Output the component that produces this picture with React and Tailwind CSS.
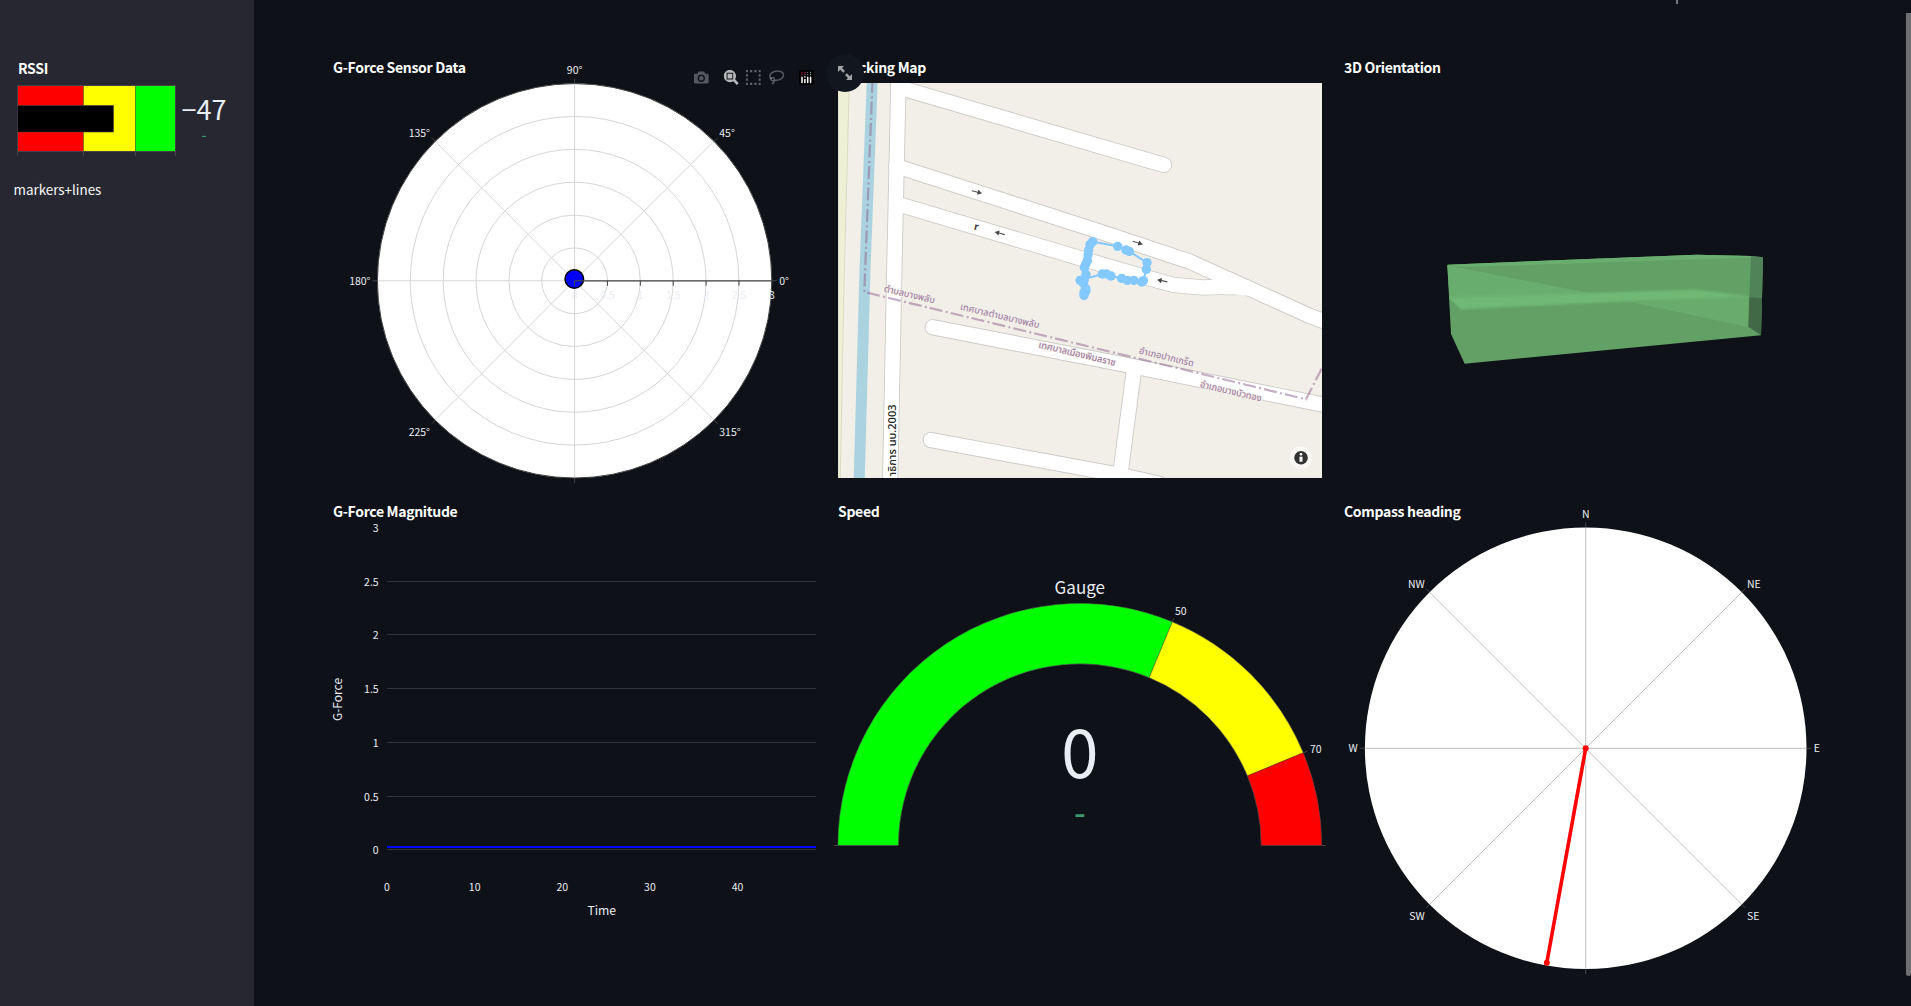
import React from "react";

const SANS = "font-['Noto_Sans_CJK_JP','Noto_Sans',sans-serif]";
const AXIS = "#444";
const TEXT = "#e9edf4";

function rad(deg) {
  return (deg * Math.PI) / 180;
}

function Panel({ title, children }) {
  return (
    <section className="flex flex-col">
      <h2 className="flex h-[29px] items-center pb-[4px] text-[14px] leading-[20px] font-bold tracking-[-0.32px] text-white">
        {title}
      </h2>
      {children}
    </section>
  );
}

function Label({ x, y, anchor = "middle", size = 10.5, fill = TEXT, weight = 400, children }) {
  return (
    <text x={x} y={y} textAnchor={anchor} fontSize={size} fill={fill} fontWeight={weight}>
      {children}
    </text>
  );
}

/* ---------- Sidebar ---------- */

function Rssi() {
  return (
    <svg viewBox="0 83 254 80" className="block h-[80px] w-[254px]">
      <rect x="17.5" y="85.5" width="66" height="66" fill="#f00" />
      <rect x="83.5" y="85.5" width="52" height="66" fill="#ff0" />
      <rect x="135.5" y="85.5" width="40" height="66" fill="#0f0" />
      <g fill="none" stroke={AXIS}>
        <rect x="17.5" y="85.5" width="158" height="66" />
        <path d="M83.5 85.5v66M135.5 85.5v66" strokeOpacity="0.4" />
      </g>
      <rect x="17.5" y="105.5" width="96" height="26.5" fill="#000" stroke="#444" strokeOpacity="0.6" />
      <path d="M17.5 152v4M83.5 152v4M135.5 152v4M175.5 152v4" stroke={AXIS} />
      <Label x={204} y={120} size={27}>−47</Label>
      <Label x={204} y={140} size={14} weight={500} fill="#3d9970">-</Label>
    </svg>
  );
}

/* ---------- Row 1 ---------- */

const FLIP = "matrix(1 0 0 -1 0 850)";

function ModeBar() {
  return (
    <g fill="#fff">
      <svg x="693.8" y="70" width="15" height="15" viewBox="0 0 1000 1000" fillOpacity="0.3">
        <path
          transform={FLIP}
          d="m500 450c-83 0-150-67-150-150 0-83 67-150 150-150 83 0 150 67 150 150 0 83-67 150-150 150z m400 150h-120c-16 0-34 13-39 29l-31 93c-6 15-23 28-40 28h-340c-16 0-34-13-39-28l-31-94c-6-15-23-28-40-28h-120c-55 0-100-45-100-100v-450c0-55 45-100 100-100h800c55 0 100 45 100 100v450c0 55-45 100-100 100z m-400-550c-138 0-250 112-250 250 0 138 112 250 250 250 138 0 250-112 250-250 0-138-112-250-250-250z m365 380c-19 0-35 16-35 35 0 19 16 35 35 35 19 0 35-16 35-35 0-19-16-35-35-35z"
        />
      </svg>
      <svg x="723.8" y="70" width="15" height="15" viewBox="0 0 1000 1000" fillOpacity="0.7">
        <path
          transform={FLIP}
          d="m1000-25l-250 251c40 63 63 138 63 218 0 224-182 406-407 406-224 0-406-182-406-406s183-406 407-406c80 0 155 22 218 62l250-250 125 125z m-812 250l0 438 437 0 0-438-437 0z m62 375l313 0 0-312-313 0 0 312z"
        />
      </svg>
      <svg x="745.8" y="70" width="15" height="15" viewBox="0 0 1000 1000" fillOpacity="0.35">
        <path
          transform={FLIP}
          d="m0 850l0-143 143 0 0 143-143 0z m286 0l0-143 143 0 0 143-143 0z m285 0l0-143 143 0 0 143-143 0z m286 0l0-143 143 0 0 143-143 0z m-857-286l0-143 143 0 0 143-143 0z m857 0l0-143 143 0 0 143-143 0z m-857-285l0-143 143 0 0 143-143 0z m857 0l0-143 143 0 0 143-143 0z m-857-286l0-143 143 0 0 143-143 0z m286 0l0-143 143 0 0 143-143 0z m285 0l0-143 143 0 0 143-143 0z m286 0l0-143 143 0 0 143-143 0z"
        />
      </svg>
      <g fill="none" stroke="#fff" strokeOpacity="0.3" strokeWidth="1.5">
        <path d="M771.3 79.3c-2-1.7-2.1-4.5.4-6.500 3-2.400 8.400-2.500 10.800-.2 2.300 2.300.8 5.600-2.900 7-1.600.6-3.400.8-5 .6" />
        <circle cx="772.6" cy="79.1" r="1.7" />
        <path d="M773.8 80.5c.6 1.400-.2 2.600-2 3.400" />
      </g>
      <rect x="799" y="70" width="15" height="15" rx="2" fill="#000" />
      <g strokeWidth="1.5" strokeLinecap="round">
        <path d="M802 77.200v5.300M804.900 79.500v3M807.700 77.200v5.300M810.600 77.200v5.300" stroke="#fff" />
        <path d="M804.900 76.800v.1" stroke="#fff" />
        <path d="M802 74.200h.01M802 72.300h.01M804.900 72.500h.01" stroke="#d6244f" strokeWidth="1.3" />
        <path d="M804.900 74.600h.01M807.700 74.400h.01M807.700 72.300h.01" stroke="#8d7f96" strokeWidth="1.2" />
        <path d="M810.600 74.400h.01M810.600 72.300h.01" stroke="#8fd0cf" strokeWidth="1.2" />
      </g>
    </g>
  );
}

function SensorPolar() {
  const cx = 574.6;
  const cy = 280.8;
  const r = 197.2;
  const step = r / 6;
  return (
    <svg viewBox="333 83 484 395" className="block h-[395px] w-[484px] overflow-visible">
      <circle cx={cx} cy={cy} r={r} fill="#fff" />
      <g fill="none" stroke="#d6d6d6" strokeWidth="1">
        {[1, 2, 3, 4, 5].map((i) => (
          <circle key={i} cx={cx} cy={cy} r={step * i} />
        ))}
        {[0, 45, 90, 135, 180, 225, 270, 315].map((a) => (
          <path key={a} d={`M${cx} ${cy}L${cx + r * Math.cos(rad(a))} ${cy + r * Math.sin(rad(a))}`} />
        ))}
      </g>
      <circle cx={cx} cy={cy} r={r} fill="none" stroke={AXIS} />
      {[0, 45, 90, 135, 180, 225, 270, 315].map((a) => (
        <path
          key={a}
          stroke={AXIS}
          d={`M${cx + r * Math.cos(rad(a))} ${cy + r * Math.sin(rad(a))}L${cx + (r + 5) * Math.cos(rad(a))} ${cy + (r + 5) * Math.sin(rad(a))}`}
        />
      ))}
      <circle cx="574.3" cy="279" r="9.3" fill="#00f" stroke="#000" strokeWidth="1.5" />
      <path d={`M${cx} ${cy}H${cx + r}`} stroke={AXIS} strokeWidth="1.2" />
      {[0, 1, 2, 3, 4, 5, 6].map((i) => (
        <React.Fragment key={i}>
          <path d={`M${cx + step * i} ${cy}v5`} stroke={AXIS} />
          <Label x={cx + step * i} y={299.3}>{i / 2}</Label>
        </React.Fragment>
      ))}
      <Label x={574.6} y={74.3}>90°</Label>
      <Label x={719.3} y={137} anchor="start">45°</Label>
      <Label x={430} y={137} anchor="end">135°</Label>
      <Label x={370.5} y={285} anchor="end">180°</Label>
      <Label x={779.3} y={285} anchor="start">0°</Label>
      <Label x={430} y={436} anchor="end">225°</Label>
      <Label x={719.3} y={436} anchor="start">315°</Label>
      <ModeBar />
    </svg>
  );
}

const ROADS = [
  "M898 87.2L1164 165",
  "M896 166L1093.3 229.5L1190 261.7L1280 302.5L1310 316L1330 323.5",
  "M896 203.5L1083 259L1150 278.5L1174 285L1203 287.5L1232 286.7",
  "M1225 287.2L1246 287",
  "M932.7 327.3L1126.7 365L1330 406",
  "M1134 370L1120.3 474",
  "M930.7 440L1120 475L1160 484",
  "M898.6 75L894 285L890 490",
];

const TRACK = [
  [121, 181], [187, 162], [200, 162], [213, 168], [245, 175], [262, 181], [282, 181], [305, 186], [310, 182],
  [319, 148], [321, 128], [268, 94], [258, 90], [233, 79], [158, 65], [150, 74], [146, 90], [144, 105],
  [142, 122], [137, 133], [133, 143], [138, 163], [121, 181], [133, 179], [130, 190], [137, 205], [138, 213], [132, 218], [132, 226],
].map(([x, y]) => [1040 + x / 3, 220 + y / 3]);

function OneWay({ x, y, angle }) {
  return (
    <g transform={`translate(${x} ${y}) rotate(${angle})`}>
      <path d="M-5 0H2" stroke="#555" strokeWidth="1.1" />
      <path d="M1 -2.600L5.500 0L1 2.600z" fill="#444" />
    </g>
  );
}

function MapLabel({ x, y, width, angle = 13.5, children }) {
  return (
    <text
      transform={`translate(${x} ${y}) rotate(${angle})`}
      textLength={width}
      lengthAdjust="spacingAndGlyphs"
      fontSize="9.5"
      fontWeight="500"
      fill="#a27fa2"
      stroke="#f2efe9"
      strokeWidth="1.5"
      paintOrder="stroke"
    >
      {children}
    </text>
  );
}

function TrackingMap() {
  return (
    <div className="relative">
      <svg viewBox="838 83 484 395" className="block h-[395px] w-[484px] font-['Noto_Sans','Noto_Sans_Thai',sans-serif]">
        <rect x="838" y="83" width="484" height="395" fill="#f2efe9" />
        <path d="M838 83H849.300L844 285L840.300 478H838z" fill="#eef0d5" stroke="#dcdcc4" />
        <path d="M872.300 80L865 270L859.200 480" fill="none" stroke="#aad3df" strokeWidth="11" />
        <g fill="none" strokeLinecap="round" strokeLinejoin="round">
          {ROADS.map((d) => (
            <path key={d} d={d} stroke="#cdcbc8" strokeWidth="16.2" />
          ))}
          {ROADS.map((d) => (
            <path key={d} d={d} stroke="#fff" strokeWidth="14.4" />
          ))}
        </g>
        <path d="M1236 294.500L1262 297L1246 284L1228 283z" fill="#fff" />
        <path
          d="M872.500 80L864.300 292L1306 399.300L1323 366"
          fill="none"
          stroke="#8d618b"
          strokeOpacity="0.5"
          strokeWidth="2.2"
          strokeDasharray="13 3.5 2 3"
        />
        <OneWay x={976.7} y={192} angle={14} />
        <OneWay x={1137.5} y={242.7} angle={18} />
        <OneWay x={1000} y={233.3} angle={195} />
        <OneWay x={1162.5} y={280.8} angle={192} />
        <text transform="translate(973.5 229.5) rotate(12)" fontSize="10" fontWeight="700" fill="#444">r</text>
        <MapLabel x={883.5} y={291.5} width={52}>ตำบลบางพลับ</MapLabel>
        <MapLabel x={959.8} y={309.5} width={81}>เทศบาลตำบลบางพลับ</MapLabel>
        <MapLabel x={1038} y={347.5} width={79}>เทศบาลเมืองพิมลราช</MapLabel>
        <MapLabel x={1138.5} y={353.5} width={56}>อำเภอปากเกร็ด</MapLabel>
        <MapLabel x={1199.5} y={387} width={63}>อำเภอบางบัวทอง</MapLabel>
        <text transform="translate(896 404.5) rotate(-90)" textAnchor="end" fontSize="11" fontWeight="500" fill="#222">
          าธิการ นบ.2003
        </text>
        <path d={"M" + TRACK.map((p) => p.join(" ")).join("L")} fill="none" stroke="#83c9ff" strokeWidth="2" />
        {TRACK.map(([x, y], i) => (
          <circle key={i} cx={x} cy={y} r="4.7" fill="#83c9ff" />
        ))}
        <circle cx="1301" cy="457.7" r="11.3" fill="#f8f7f4" />
        <circle cx="1301" cy="457.7" r="6.8" fill="#333" />
        <path d="M1299.500 456.700h3v5h-3z" fill="#fff" />
        <circle cx="1301" cy="454.3" r="1.3" fill="#fff" />
      </svg>
      <button className="absolute -top-[29px] -left-[12px] flex h-[38px] w-[38px] items-center justify-center rounded-full bg-[#12161e]">
        <svg viewBox="0 0 14 14" className="h-[14px] w-[14px]" fill="#a2a3a6">
          <path d="M0 0h6L4 2l3 3-1.800 1.800-3-3L0 6z" />
          <path d="M14 14H8l2-2-3-3 1.800-1.800 3 3L14 8z" />
        </svg>
      </button>
    </div>
  );
}

function Orientation() {
  return (
    <svg viewBox="1344 83 484 395" className="block h-[395px] w-[484px]">
      <defs>
        <filter id="soft" x="-5%" y="-30%" width="110%" height="160%">
          <feGaussianBlur stdDeviation="0.6 1.3" />
        </filter>
        <clipPath id="front">
          <path d="M1447.300 264.700L1696.700 254.700L1751 256L1749.300 297L1748.300 363L1464.700 363.700L1451 334z" />
        </clipPath>
      </defs>
      <path d="M1447.300 264.700L1696.700 254.700L1751 256L1763 257.300L1761 335.300L1464.700 363.700L1451 334z" fill="#62a066" />
      <path d="M1447.300 264.700L1696.700 254.700L1751 256L1751 257.500L1462 267z" fill="#6aae6f" />
      <path d="M1447.300 265.300L1592 293.500L1449.500 297.500z" fill="#69ad6e" />
      <path d="M1632 302.500L1750 296L1748.300 327z" fill="#68ab6c" />
      <g clipPath="url(#front)">
        <path
          d="M1448 297L1592 293L1696 289.500L1751 296.500L1700 299L1590 303L1461 309.500z"
          fill="#70b874"
          filter="url(#soft)"
        />
      </g>
      <path d="M1751 256L1763 257.300L1762 298L1749.300 297z" fill="#508357" />
      <path d="M1749.300 297L1762 298L1761 335.300L1748.300 326.700z" fill="#416946" />
    </svg>
  );
}

/* ---------- Row 2 ---------- */

function Magnitude() {
  const rows = [
    [527.5, "3"],
    [581.5, "2.5"],
    [634.5, "2"],
    [688.5, "1.5"],
    [742.5, "1"],
    [796.5, "0.5"],
    [849.5, "0"],
  ];
  return (
    <svg viewBox="333 527 484 443" className="block h-[443px] w-[484px] overflow-visible">
      {rows.map(([y, label], i) => (
        <React.Fragment key={label}>
          {i > 0 && <path d={`M387 ${y}H816`} stroke="#31333f" />}
          <Label x={378.7} y={y + 4} anchor="end">{label}</Label>
        </React.Fragment>
      ))}
      <path d="M387 847H816" stroke="#00f" strokeWidth="2" />
      {[0, 10, 20, 30, 40].map((v) => (
        <Label key={v} x={387 + v * 8.765} y={891.3}>{v}</Label>
      ))}
      <Label x={601.8} y={915.3} size={12.2}>Time</Label>
      <text transform="translate(341.5 699.5) rotate(-90)" textAnchor="middle" fontSize="12" fill={TEXT}>
        G-Force
      </text>
    </svg>
  );
}

function arc(from, to) {
  const cx = 1079.8;
  const cy = 845.3;
  const R = 241.8;
  const r = 181.5;
  const p = (rr, a) => `${cx + rr * Math.cos(rad(a))} ${cy - rr * Math.sin(rad(a))}`;
  return `M${p(R, from)}A${R} ${R} 0 0 1 ${p(R, to)}L${p(r, to)}A${r} ${r} 0 0 0 ${p(r, from)}z`;
}

function Speed() {
  return (
    <svg viewBox="838 527 484 443" className="block h-[443px] w-[484px] overflow-visible">
      <path d={arc(180, 0)} fill="none" stroke={AXIS} />
      <path d={arc(180, 67.5)} fill="#0f0" stroke={AXIS} strokeOpacity="0.35" />
      <path d={arc(67.5, 22.5)} fill="#ff0" stroke={AXIS} strokeOpacity="0.35" />
      <path d={arc(22.5, 0)} fill="#f00" stroke={AXIS} strokeOpacity="0.35" />
      <path d="M834 845.5h4M1321.500 845.500h4M1172.300 621.900l1.500-3.700M1303.200 752.800l4-1.600" stroke={AXIS} />
      <Label x={1079.8} y={594} size={17}>Gauge</Label>
      <Label x={1175} y={615.3} anchor="start">50</Label>
      <Label x={1310} y={753.3} anchor="start">70</Label>
      <Label x={1079.8} y={778.3} size={67}>0</Label>
      <Label x={1079.8} y={825.3} size={33} weight={500} fill="#3d9970">-</Label>
    </svg>
  );
}

function Compass() {
  const cx = 1585.7;
  const cy = 748.3;
  const r = 220.8;
  const spokes = [0, 45, 90, 135, 180, 225, 270, 315];
  return (
    <svg viewBox="1344 527 484 443" className="block h-[443px] w-[484px] overflow-visible">
      <circle cx={cx} cy={cy} r={r} fill="#fff" />
      {spokes.map((a) => (
        <React.Fragment key={a}>
          <path d={`M${cx} ${cy}L${cx + r * Math.cos(rad(a))} ${cy + r * Math.sin(rad(a))}`} stroke="#bebebe" />
          <path
            d={`M${cx + r * Math.cos(rad(a))} ${cy + r * Math.sin(rad(a))}L${cx + (r + 5) * Math.cos(rad(a))} ${cy + (r + 5) * Math.sin(rad(a))}`}
            stroke={AXIS}
          />
        </React.Fragment>
      ))}
      <path d="M1585.700 748.300L1546.800 962.700" stroke="#f00" strokeWidth="3.6" />
      <circle cx="1585.7" cy="748.3" r="3" fill="#f00" />
      <circle cx="1546.8" cy="962.7" r="3" fill="#f00" />
      <Label x={1585.7} y={517.7}>N</Label>
      <Label x={1747} y={588} anchor="start">NE</Label>
      <Label x={1813.7} y={752} anchor="start">E</Label>
      <Label x={1747} y={920} anchor="start">SE</Label>
      <Label x={1424.7} y={920} anchor="end">SW</Label>
      <Label x={1357.7} y={752} anchor="end">W</Label>
      <Label x={1424.7} y={588} anchor="end">NW</Label>
    </svg>
  );
}

export default function App() {
  return (
    <div className={`relative flex h-[1006px] w-[1911px] overflow-hidden bg-[#0e1117] ${SANS}`}>
      <aside className="flex w-[254px] shrink-0 flex-col bg-[#262730] pt-[57px]">
        <h2 className="flex h-[26px] items-center pb-[4px] pl-[18px] text-[14px] leading-[20px] font-bold tracking-[-0.3px] text-white">
          RSSI
        </h2>
        <Rssi />
        <p className="mt-[14px] pl-[13.5px] text-[13.4px] leading-[24px] text-[#fafafa]">markers+lines</p>
      </aside>
      <main className="grid grid-cols-[484px_485px_484px] content-start gap-x-[21px] gap-y-[20px] pt-[54px] pl-[79px]">
        <Panel title="G-Force Sensor Data"><SensorPolar /></Panel>
        <Panel title="Tracking Map"><TrackingMap /></Panel>
        <Panel title="3D Orientation"><Orientation /></Panel>
        <Panel title="G-Force Magnitude"><Magnitude /></Panel>
        <Panel title="Speed"><Speed /></Panel>
        <Panel title="Compass heading"><Compass /></Panel>
      </main>
      <div className="absolute top-0 left-[1676px] h-[4px] w-[2px] bg-[#77787b]" />
      <div className="absolute top-[13px] right-0 h-[963px] w-[5px] rounded-b bg-[#6e6f73]" />
    </div>
  );
}
